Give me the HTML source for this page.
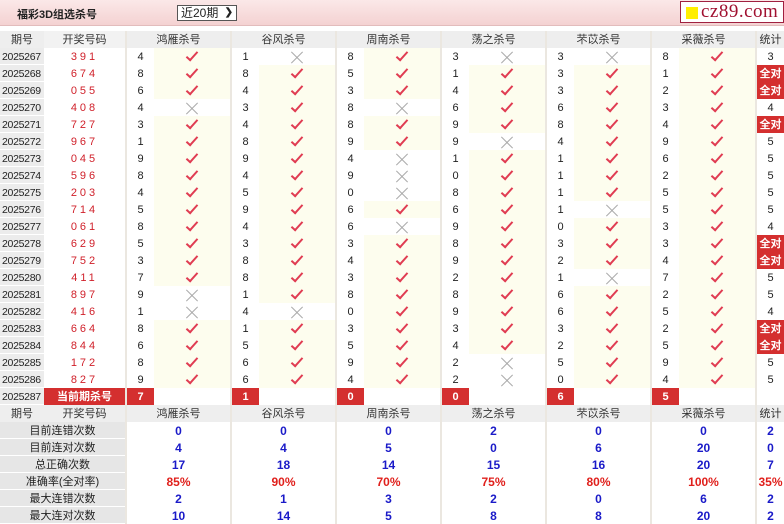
<!DOCTYPE html>
<html><head><meta charset="utf-8">
<style>
*{margin:0;padding:0;box-sizing:border-box}
body{width:784px;height:522px;overflow:hidden;background:#fff;font-family:"Liberation Sans","Noto Sans CJK SC",sans-serif;font-size:11px;color:#222;position:relative}
.top{position:absolute;left:0;top:0;width:784px;height:26px;background:linear-gradient(#fbe8e8,#f4d2d2);border-bottom:1px solid #e2bcbc}
.title{position:absolute;left:17px;top:6px;font-size:11px;font-weight:bold;color:#222}
.sel{position:absolute;left:177px;top:5px;width:60px;height:16px;border:1px solid #555;background:#fff;font-size:12px;line-height:14px;padding-left:3px}
.sel b{position:absolute;right:3px;top:0;font-size:10px}
.logo{position:absolute;left:680px;top:1px;width:104px;height:22px;border:1px solid #a02040;background:#fff}
.logo i{position:absolute;left:5px;top:5px;width:12px;height:12px;background:#ffee00}
.logo span{position:absolute;left:20px;top:0;font-family:"Liberation Serif",serif;font-size:19px;line-height:20px;color:#a01030;letter-spacing:0.5px}
table{position:absolute;left:0;top:31px;border-collapse:collapse;table-layout:fixed;width:784px}
tr{height:17px}
td{height:17px;padding:0;text-align:center;font-size:11px;line-height:16px;white-space:nowrap;overflow:hidden}
.h td{background:#eeeeee;color:#333}
.p{background:#ececec;color:#222;box-shadow:inset 0 -1px #fff;text-align:left;padding-left:2px;font-size:10.5px;letter-spacing:-0.3px}
.w{color:#d0202a;letter-spacing:3px}
.n{border-left:2px solid #ebe7e0}
.c{background:#fdfdee}
.e{background:#fff}
.k{display:inline-block;width:6px;height:12px;border-right:2px solid #e03c52;border-bottom:2px solid #e03c52;transform:rotate(42deg);margin-top:-4px;vertical-align:middle}
.x{display:inline-block;position:relative;width:12px;height:12px;vertical-align:middle}
.x:before,.x:after{content:"";position:absolute;left:-2px;top:6px;width:16px;height:1px;background:#aaa;transform:rotate(45deg)}
.x:after{transform:rotate(-45deg)}
.t{border-left:2px solid #ebe7e0}
.a{background:#d42f2f;color:#fff;font-weight:bold}
.r{background:#d42f2f;color:#fff;font-weight:bold}
.lb{background:#e6e6e6;box-shadow:inset 0 -1px #fff;color:#222}
.v{color:#1a1ac8;font-weight:bold;font-size:12px}
.q{color:#e0201c;font-weight:bold;font-size:12px}
</style></head><body>
<div class="top"><div class="title">福彩3D组选杀号</div><div class="sel">近20期<b>&#10095;</b></div><div class="logo"><i></i><span>cz89.com</span></div></div>
<table>
<colgroup><col style="width:44px"><col style="width:82px"><col style="width:28px"><col style="width:77px"><col style="width:28px"><col style="width:77px"><col style="width:28px"><col style="width:77px"><col style="width:28px"><col style="width:77px"><col style="width:28px"><col style="width:77px"><col style="width:28px"><col style="width:77px"><col style="width:28px"></colgroup>
<tr class="h"><td>期号</td><td style="background:#f2f2f2">开奖号码</td><td colspan="2" class="n">鸿雁杀号</td><td colspan="2" class="n">谷风杀号</td><td colspan="2" class="n">周南杀号</td><td colspan="2" class="n">荡之杀号</td><td colspan="2" class="n">芣苡杀号</td><td colspan="2" class="n">采薇杀号</td><td class="t">统计</td></tr>
<tr><td class="p">2025267</td><td class="w">391</td><td class="n">4</td><td class="c"><i class="k"></i></td><td class="n">1</td><td class="e"><i class="x"></i></td><td class="n">8</td><td class="c"><i class="k"></i></td><td class="n">3</td><td class="e"><i class="x"></i></td><td class="n">3</td><td class="e"><i class="x"></i></td><td class="n">8</td><td class="c"><i class="k"></i></td><td class="t">3</td></tr>
<tr><td class="p">2025268</td><td class="w">674</td><td class="n">8</td><td class="c"><i class="k"></i></td><td class="n">8</td><td class="c"><i class="k"></i></td><td class="n">5</td><td class="c"><i class="k"></i></td><td class="n">1</td><td class="c"><i class="k"></i></td><td class="n">3</td><td class="c"><i class="k"></i></td><td class="n">1</td><td class="c"><i class="k"></i></td><td class="t a">全对</td></tr>
<tr><td class="p">2025269</td><td class="w">055</td><td class="n">6</td><td class="c"><i class="k"></i></td><td class="n">4</td><td class="c"><i class="k"></i></td><td class="n">3</td><td class="c"><i class="k"></i></td><td class="n">4</td><td class="c"><i class="k"></i></td><td class="n">3</td><td class="c"><i class="k"></i></td><td class="n">2</td><td class="c"><i class="k"></i></td><td class="t a">全对</td></tr>
<tr><td class="p">2025270</td><td class="w">408</td><td class="n">4</td><td class="e"><i class="x"></i></td><td class="n">3</td><td class="c"><i class="k"></i></td><td class="n">8</td><td class="e"><i class="x"></i></td><td class="n">6</td><td class="c"><i class="k"></i></td><td class="n">6</td><td class="c"><i class="k"></i></td><td class="n">3</td><td class="c"><i class="k"></i></td><td class="t">4</td></tr>
<tr><td class="p">2025271</td><td class="w">727</td><td class="n">3</td><td class="c"><i class="k"></i></td><td class="n">4</td><td class="c"><i class="k"></i></td><td class="n">8</td><td class="c"><i class="k"></i></td><td class="n">9</td><td class="c"><i class="k"></i></td><td class="n">8</td><td class="c"><i class="k"></i></td><td class="n">4</td><td class="c"><i class="k"></i></td><td class="t a">全对</td></tr>
<tr><td class="p">2025272</td><td class="w">967</td><td class="n">1</td><td class="c"><i class="k"></i></td><td class="n">8</td><td class="c"><i class="k"></i></td><td class="n">9</td><td class="c"><i class="k"></i></td><td class="n">9</td><td class="e"><i class="x"></i></td><td class="n">4</td><td class="c"><i class="k"></i></td><td class="n">9</td><td class="c"><i class="k"></i></td><td class="t">5</td></tr>
<tr><td class="p">2025273</td><td class="w">045</td><td class="n">9</td><td class="c"><i class="k"></i></td><td class="n">9</td><td class="c"><i class="k"></i></td><td class="n">4</td><td class="e"><i class="x"></i></td><td class="n">1</td><td class="c"><i class="k"></i></td><td class="n">1</td><td class="c"><i class="k"></i></td><td class="n">6</td><td class="c"><i class="k"></i></td><td class="t">5</td></tr>
<tr><td class="p">2025274</td><td class="w">596</td><td class="n">8</td><td class="c"><i class="k"></i></td><td class="n">4</td><td class="c"><i class="k"></i></td><td class="n">9</td><td class="e"><i class="x"></i></td><td class="n">0</td><td class="c"><i class="k"></i></td><td class="n">1</td><td class="c"><i class="k"></i></td><td class="n">2</td><td class="c"><i class="k"></i></td><td class="t">5</td></tr>
<tr><td class="p">2025275</td><td class="w">203</td><td class="n">4</td><td class="c"><i class="k"></i></td><td class="n">5</td><td class="c"><i class="k"></i></td><td class="n">0</td><td class="e"><i class="x"></i></td><td class="n">8</td><td class="c"><i class="k"></i></td><td class="n">1</td><td class="c"><i class="k"></i></td><td class="n">5</td><td class="c"><i class="k"></i></td><td class="t">5</td></tr>
<tr><td class="p">2025276</td><td class="w">714</td><td class="n">5</td><td class="c"><i class="k"></i></td><td class="n">9</td><td class="c"><i class="k"></i></td><td class="n">6</td><td class="c"><i class="k"></i></td><td class="n">6</td><td class="c"><i class="k"></i></td><td class="n">1</td><td class="e"><i class="x"></i></td><td class="n">5</td><td class="c"><i class="k"></i></td><td class="t">5</td></tr>
<tr><td class="p">2025277</td><td class="w">061</td><td class="n">8</td><td class="c"><i class="k"></i></td><td class="n">4</td><td class="c"><i class="k"></i></td><td class="n">6</td><td class="e"><i class="x"></i></td><td class="n">9</td><td class="c"><i class="k"></i></td><td class="n">0</td><td class="c"><i class="k"></i></td><td class="n">3</td><td class="c"><i class="k"></i></td><td class="t">4</td></tr>
<tr><td class="p">2025278</td><td class="w">629</td><td class="n">5</td><td class="c"><i class="k"></i></td><td class="n">3</td><td class="c"><i class="k"></i></td><td class="n">3</td><td class="c"><i class="k"></i></td><td class="n">8</td><td class="c"><i class="k"></i></td><td class="n">3</td><td class="c"><i class="k"></i></td><td class="n">3</td><td class="c"><i class="k"></i></td><td class="t a">全对</td></tr>
<tr><td class="p">2025279</td><td class="w">752</td><td class="n">3</td><td class="c"><i class="k"></i></td><td class="n">8</td><td class="c"><i class="k"></i></td><td class="n">4</td><td class="c"><i class="k"></i></td><td class="n">9</td><td class="c"><i class="k"></i></td><td class="n">2</td><td class="c"><i class="k"></i></td><td class="n">4</td><td class="c"><i class="k"></i></td><td class="t a">全对</td></tr>
<tr><td class="p">2025280</td><td class="w">411</td><td class="n">7</td><td class="c"><i class="k"></i></td><td class="n">8</td><td class="c"><i class="k"></i></td><td class="n">3</td><td class="c"><i class="k"></i></td><td class="n">2</td><td class="c"><i class="k"></i></td><td class="n">1</td><td class="e"><i class="x"></i></td><td class="n">7</td><td class="c"><i class="k"></i></td><td class="t">5</td></tr>
<tr><td class="p">2025281</td><td class="w">897</td><td class="n">9</td><td class="e"><i class="x"></i></td><td class="n">1</td><td class="c"><i class="k"></i></td><td class="n">8</td><td class="c"><i class="k"></i></td><td class="n">8</td><td class="c"><i class="k"></i></td><td class="n">6</td><td class="c"><i class="k"></i></td><td class="n">2</td><td class="c"><i class="k"></i></td><td class="t">5</td></tr>
<tr><td class="p">2025282</td><td class="w">416</td><td class="n">1</td><td class="e"><i class="x"></i></td><td class="n">4</td><td class="e"><i class="x"></i></td><td class="n">0</td><td class="c"><i class="k"></i></td><td class="n">9</td><td class="c"><i class="k"></i></td><td class="n">6</td><td class="c"><i class="k"></i></td><td class="n">5</td><td class="c"><i class="k"></i></td><td class="t">4</td></tr>
<tr><td class="p">2025283</td><td class="w">664</td><td class="n">8</td><td class="c"><i class="k"></i></td><td class="n">1</td><td class="c"><i class="k"></i></td><td class="n">3</td><td class="c"><i class="k"></i></td><td class="n">3</td><td class="c"><i class="k"></i></td><td class="n">3</td><td class="c"><i class="k"></i></td><td class="n">2</td><td class="c"><i class="k"></i></td><td class="t a">全对</td></tr>
<tr><td class="p">2025284</td><td class="w">844</td><td class="n">6</td><td class="c"><i class="k"></i></td><td class="n">5</td><td class="c"><i class="k"></i></td><td class="n">5</td><td class="c"><i class="k"></i></td><td class="n">4</td><td class="c"><i class="k"></i></td><td class="n">2</td><td class="c"><i class="k"></i></td><td class="n">5</td><td class="c"><i class="k"></i></td><td class="t a">全对</td></tr>
<tr><td class="p">2025285</td><td class="w">172</td><td class="n">8</td><td class="c"><i class="k"></i></td><td class="n">6</td><td class="c"><i class="k"></i></td><td class="n">9</td><td class="c"><i class="k"></i></td><td class="n">2</td><td class="e"><i class="x"></i></td><td class="n">5</td><td class="c"><i class="k"></i></td><td class="n">9</td><td class="c"><i class="k"></i></td><td class="t">5</td></tr>
<tr><td class="p">2025286</td><td class="w">827</td><td class="n">9</td><td class="c"><i class="k"></i></td><td class="n">6</td><td class="c"><i class="k"></i></td><td class="n">4</td><td class="c"><i class="k"></i></td><td class="n">2</td><td class="e"><i class="x"></i></td><td class="n">0</td><td class="c"><i class="k"></i></td><td class="n">4</td><td class="c"><i class="k"></i></td><td class="t">5</td></tr>
<tr><td class="p">2025287</td><td class="r">当前期杀号</td><td class="r n">7</td><td></td><td class="r n">1</td><td></td><td class="r n">0</td><td></td><td class="r n">0</td><td></td><td class="r n">6</td><td></td><td class="r n">5</td><td></td><td class="t"></td></tr>
<tr class="h"><td>期号</td><td>开奖号码</td><td colspan="2" class="n">鸿雁杀号</td><td colspan="2" class="n">谷风杀号</td><td colspan="2" class="n">周南杀号</td><td colspan="2" class="n">荡之杀号</td><td colspan="2" class="n">芣苡杀号</td><td colspan="2" class="n">采薇杀号</td><td class="t">统计</td></tr>
<tr><td colspan="2" class="lb">目前连错次数</td><td colspan="2" class="n v">0</td><td colspan="2" class="n v">0</td><td colspan="2" class="n v">0</td><td colspan="2" class="n v">2</td><td colspan="2" class="n v">0</td><td colspan="2" class="n v">0</td><td class="t v">2</td></tr>
<tr><td colspan="2" class="lb">目前连对次数</td><td colspan="2" class="n v">4</td><td colspan="2" class="n v">4</td><td colspan="2" class="n v">5</td><td colspan="2" class="n v">0</td><td colspan="2" class="n v">6</td><td colspan="2" class="n v">20</td><td class="t v">0</td></tr>
<tr><td colspan="2" class="lb">总正确次数</td><td colspan="2" class="n v">17</td><td colspan="2" class="n v">18</td><td colspan="2" class="n v">14</td><td colspan="2" class="n v">15</td><td colspan="2" class="n v">16</td><td colspan="2" class="n v">20</td><td class="t v">7</td></tr>
<tr><td colspan="2" class="lb">准确率(全对率)</td><td colspan="2" class="n q">85%</td><td colspan="2" class="n q">90%</td><td colspan="2" class="n q">70%</td><td colspan="2" class="n q">75%</td><td colspan="2" class="n q">80%</td><td colspan="2" class="n q">100%</td><td class="t q">35%</td></tr>
<tr><td colspan="2" class="lb">最大连错次数</td><td colspan="2" class="n v">2</td><td colspan="2" class="n v">1</td><td colspan="2" class="n v">3</td><td colspan="2" class="n v">2</td><td colspan="2" class="n v">0</td><td colspan="2" class="n v">6</td><td class="t v">2</td></tr>
<tr><td colspan="2" class="lb">最大连对次数</td><td colspan="2" class="n v">10</td><td colspan="2" class="n v">14</td><td colspan="2" class="n v">5</td><td colspan="2" class="n v">8</td><td colspan="2" class="n v">8</td><td colspan="2" class="n v">20</td><td class="t v">2</td></tr>
</table>
</body></html>
